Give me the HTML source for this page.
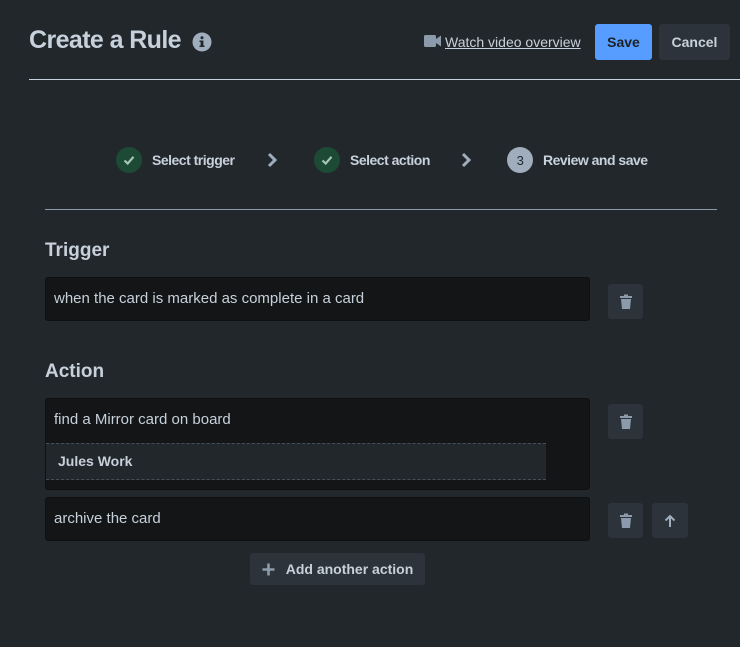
<!DOCTYPE html>
<html><head><meta charset="utf-8"><style>
*{box-sizing:border-box;margin:0;padding:0}
body{width:740px;height:647px;background:#22272b;font-family:"Liberation Sans",sans-serif;color:#b6c2cf;position:relative;overflow:hidden}
.a{position:absolute}
.title{left:29px;top:26px;font-size:25px;font-weight:bold;color:#c7d1db;letter-spacing:-0.6px}
.btn{position:absolute;border-radius:3px;font-weight:bold;font-size:14px;display:flex;align-items:center;justify-content:center}
.ib{position:absolute;width:35px;height:35px;background:#2c333a;border-radius:3px;display:flex;align-items:center;justify-content:center}
.inp{position:absolute;left:45px;width:545px;background:#131517;border-radius:3px;border:1px solid #0e1012;font-size:15px;color:#c7d1db;padding-left:8px}
.step{position:absolute;top:147px;display:flex;align-items:center;font-size:14px;font-weight:bold;color:#c7d1db;letter-spacing:-0.5px}
.circ{width:26px;height:26px;border-radius:50%;background:#1c4a35;display:flex;align-items:center;justify-content:center;margin-right:10px}
h2{position:absolute;left:45px;font-size:19px;font-weight:bold;color:#c7d1db}
</style></head><body>
<div class="a title">Create a Rule</div>
<svg class="a" style="left:192px;top:32px" width="20" height="20" viewBox="0 0 20 20"><circle cx="10" cy="10" r="9.5" fill="#9fadbc"/><rect x="8.6" y="8.5" width="2.8" height="6.5" fill="#22272b"/><rect x="7.5" y="8.5" width="2" height="1.5" fill="#22272b"/><rect x="7.5" y="13.6" width="5" height="1.4" fill="#22272b"/><circle cx="10" cy="5.8" r="1.5" fill="#22272b"/></svg>
<svg class="a" style="left:424px;top:35px" width="17" height="12" viewBox="0 0 17 12"><rect x="0" y="0" width="12" height="12" rx="1.5" fill="#8c9bab"/><path d="M12 4 L17 0.5 V11.5 L12 8Z" fill="#8c9bab"/></svg>
<div class="a" style="left:445px;top:34px;font-size:14px;color:#c7d1db;text-decoration:underline">Watch video overview</div>
<div class="btn" style="left:595px;top:24px;width:57px;height:36px;background:#579dff;color:#1d2125">Save</div>
<div class="btn" style="left:659px;top:24px;width:71px;height:36px;background:#2c333a;color:#c7d1db">Cancel</div>
<div class="a" style="left:29px;top:79px;width:711px;height:1px;background:#c7d1db"></div>

<div class="step" style="left:116px"><div class="circ"><svg width="14" height="14" viewBox="0 0 14 14"><path d="M2.5 7.5 L5.7 10.5 L11.5 3.8" stroke="#a6c5b4" stroke-width="2.2" fill="none"/></svg></div>Select trigger</div>
<svg class="a" style="left:266px;top:152px" width="12" height="16" viewBox="0 0 12 16"><path d="M3 2 L9 8 L3 14" stroke="#9fadbc" stroke-width="3" fill="none"/></svg>
<div class="step" style="left:314px"><div class="circ"><svg width="14" height="14" viewBox="0 0 14 14"><path d="M2.5 7.5 L5.7 10.5 L11.5 3.8" stroke="#a6c5b4" stroke-width="2.2" fill="none"/></svg></div>Select action</div>
<svg class="a" style="left:460px;top:152px" width="12" height="16" viewBox="0 0 12 16"><path d="M3 2 L9 8 L3 14" stroke="#9fadbc" stroke-width="3" fill="none"/></svg>
<div class="step" style="left:507px"><div class="circ" style="background:#9fadbc;color:#22272b;font-weight:normal;font-size:13px">3</div>Review and save</div>
<div class="a" style="left:45px;top:209px;width:672px;height:1px;background:#8c9bab"></div>

<h2 style="top:240px">Trigger</h2>
<div class="inp" style="top:277px;height:44px;line-height:42px">when the card is marked as complete in a card</div>
<div class="ib" style="left:608px;top:284px"><svg width="14" height="16" viewBox="0 0 14 16"><rect x="1" y="2" width="12" height="2" fill="#8c9bab"/><rect x="5" y="0.5" width="4" height="2" fill="#8c9bab"/><path d="M2 5 H12 L11 15 H3Z" fill="#8c9bab"/></svg></div>

<h2 style="top:361px">Action</h2>
<div class="inp" style="top:398px;height:92px"><div style="position:absolute;top:12px;left:8px">find a Mirror card on board</div>
<div style="position:absolute;left:0;top:44px;width:500px;height:37px;background:#22272b;border-top:1px dashed #454f59;border-bottom:1px dashed #454f59;font-weight:bold;font-size:14px;padding-left:12px;line-height:35px">Jules Work</div></div>
<div class="ib" style="left:608px;top:404px"><svg width="14" height="16" viewBox="0 0 14 16"><rect x="1" y="2" width="12" height="2" fill="#8c9bab"/><rect x="5" y="0.5" width="4" height="2" fill="#8c9bab"/><path d="M2 5 H12 L11 15 H3Z" fill="#8c9bab"/></svg></div>

<div class="inp" style="top:497px;height:44px;line-height:42px">archive the card</div>
<div class="ib" style="left:608px;top:503px"><svg width="14" height="16" viewBox="0 0 14 16"><rect x="1" y="2" width="12" height="2" fill="#8c9bab"/><rect x="5" y="0.5" width="4" height="2" fill="#8c9bab"/><path d="M2 5 H12 L11 15 H3Z" fill="#8c9bab"/></svg></div>
<div class="ib" style="left:652px;top:503px;width:36px"><svg width="14" height="14" viewBox="0 0 14 14"><path d="M7 13 V2 M2.5 6.5 L7 2 L11.5 6.5" stroke="#9fadbc" stroke-width="2" fill="none"/></svg></div>

<div class="btn" style="left:250px;top:553px;width:175px;height:32px;background:#2c333a;color:#c7d1db;font-size:14px"><svg width="13" height="13" viewBox="0 0 13 13" style="margin-right:11px"><path d="M6.5 0.5 V12.5 M0.5 6.5 H12.5" stroke="#8c9bab" stroke-width="2.6"/></svg>Add another action</div>
</body></html>
